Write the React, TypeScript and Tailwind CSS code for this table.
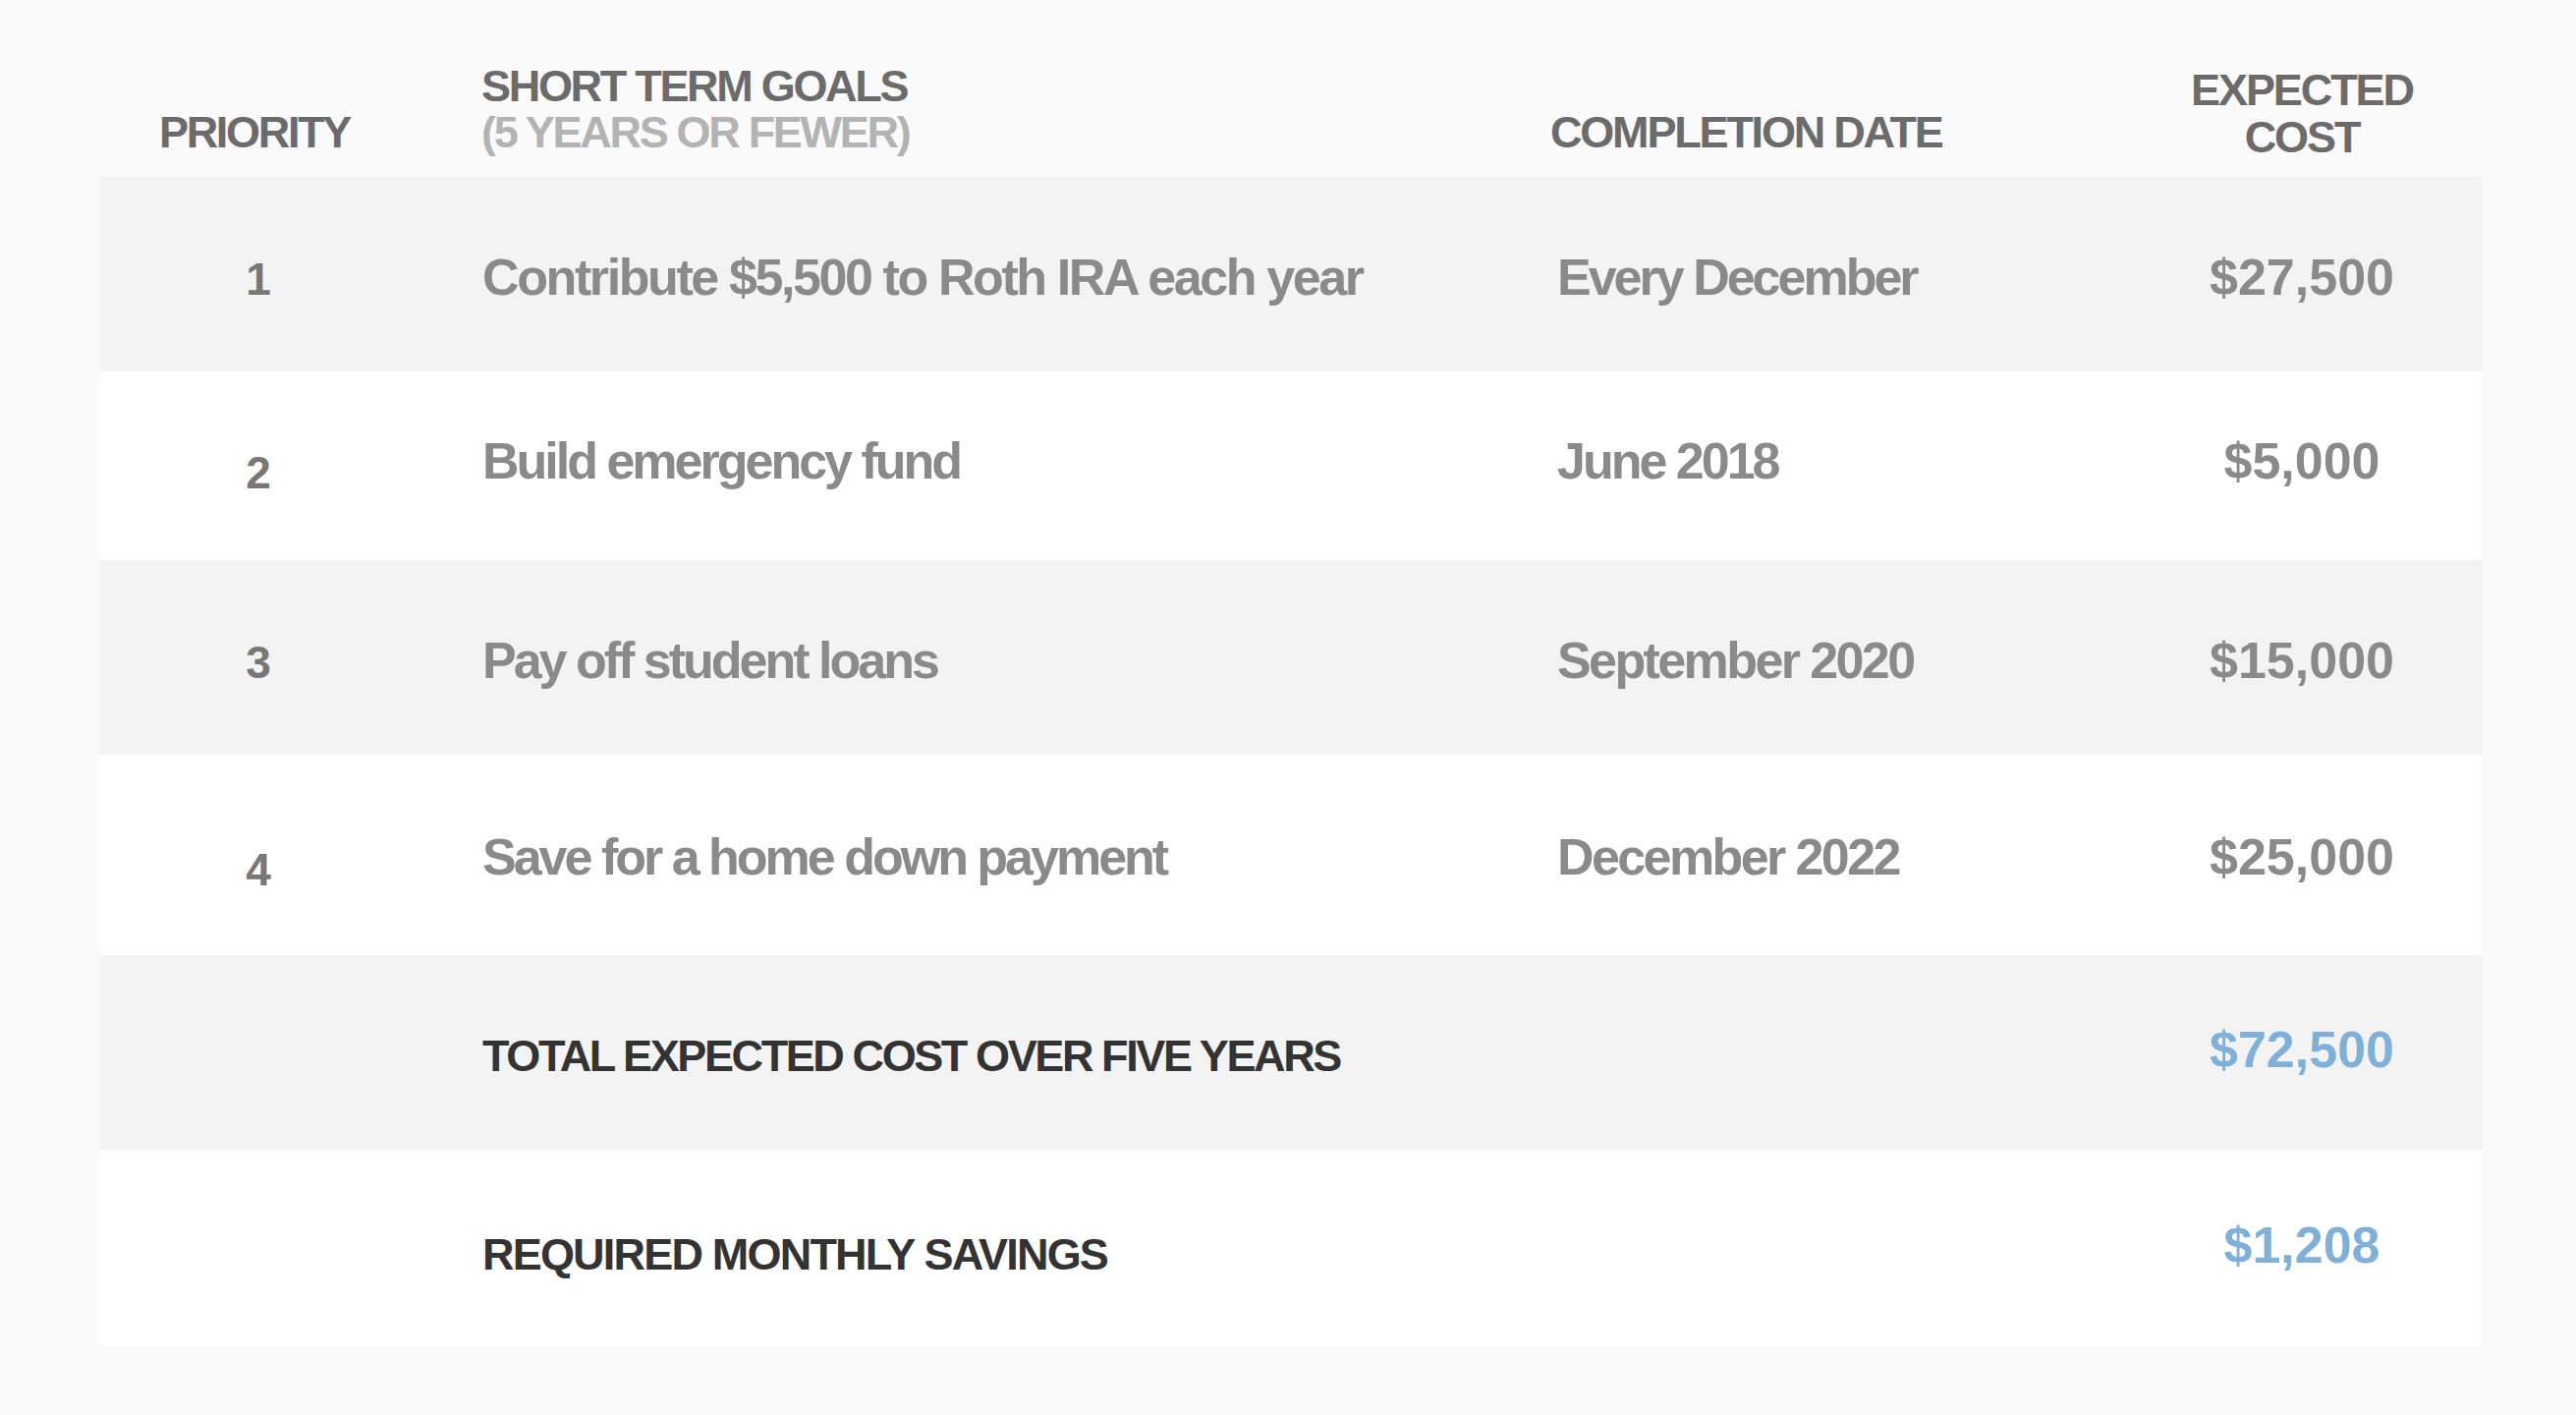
const font = { fontFamily: '"Liberation Sans", Arial, sans-serif' };

type Goal = {
  priority: string;
  goal: string;
  date: string;
  cost: string;
  h: string;
  bg: string;
  numPad: string;
  textPad: string;
  goalTrack: string;
  dateTrack: string;
};

// small per-row nudges copy the slightly uneven baselines of the original
const goals: Goal[] = [
  { priority: "1", goal: "Contribute $5,500 to Roth IRA each year", date: "Every December", cost: "$27,500", h: "h-[198px]", bg: "bg-[#f3f3f3]", numPad: "pt-[10px]", textPad: "pt-[6px]", goalTrack: "tracking-[-2.4px]", dateTrack: "tracking-[-3px]" },
  { priority: "2", goal: "Build emergency fund", date: "June 2018", cost: "$5,000", h: "h-[192px]", bg: "bg-white", numPad: "pt-[14px]", textPad: "pb-[10px]", goalTrack: "tracking-[-3px]", dateTrack: "tracking-[-3px]" },
  { priority: "3", goal: "Pay off student loans", date: "September 2020", cost: "$15,000", h: "h-[198px]", bg: "bg-[#f3f3f3]", numPad: "pt-[9px]", textPad: "pt-[6px]", goalTrack: "tracking-[-3px]", dateTrack: "tracking-[-2.6px]" },
  { priority: "4", goal: "Save for a home down payment", date: "December 2022", cost: "$25,000", h: "h-[204px]", bg: "bg-white", numPad: "pt-[29px]", textPad: "pt-[4px]", goalTrack: "tracking-[-3px]", dateTrack: "tracking-[-2.6px]" },
];

const cols = "grid grid-cols-[316px_1167px_575px_1fr]";

export default function App() {
  return (
    <div className="min-h-[1440px] w-[2622px] bg-[#fafafa] pl-[102px] pr-[96px]" style={font}>
      {/* header */}
      <div className={`${cols} h-[180px] items-end font-bold text-[#6b6b6b] text-[45px] leading-[47px] tracking-[-2.3px]`}>
        <div className="pb-[22px] pr-[2px] text-center">PRIORITY</div>
        <div className="pb-[22px] pl-[72px]">
          <div>SHORT TERM GOALS</div>
          <div className="text-[#b3b3b3]">(5 YEARS OR FEWER)</div>
        </div>
        <div className="pb-[22px] -ml-[7px] tracking-[-2.2px]">COMPLETION DATE</div>
        <div className="pb-[16px] text-center leading-[48px] tracking-[-2.1px]">
          <div>EXPECTED</div>
          <div>COST</div>
        </div>
      </div>

      {/* goal rows */}
      {goals.map((g) => (
        <div key={g.priority} className={`${cols} ${g.h} ${g.bg} items-center font-bold text-[#8a8a8a] text-[52px] leading-none`}>
          <div className={`${g.numPad} pl-[6px] text-center text-[46px] text-[#777777]`}>{g.priority}</div>
          <div className={`${g.textPad} ${g.goalTrack} pl-[73px]`}>{g.goal}</div>
          <div className={`${g.textPad} ${g.dateTrack}`}>{g.date}</div>
          <div className={`${g.textPad} text-center`}>{g.cost}</div>
        </div>
      ))}

      {/* totals */}
      <div className={`${cols} h-[198px] bg-[#f3f3f3] items-center font-bold leading-none`}>
        <div />
        <div className="pt-[6px] pl-[73px] text-[45px] text-[#333333] tracking-[-2.4px]">TOTAL EXPECTED COST OVER FIVE YEARS</div>
        <div />
        <div className="pb-[6px] text-center text-[52px] text-[#7fb0d9]">$72,500</div>
      </div>
      <div className={`${cols} h-[200px] bg-white items-center font-bold leading-none`}>
        <div />
        <div className="pt-[12px] pl-[73px] text-[45px] text-[#333333] tracking-[-1.8px]">REQUIRED MONTHLY SAVINGS</div>
        <div />
        <div className="pb-[6px] text-center text-[52px] text-[#7fb0d9]">$1,208</div>
      </div>
    </div>
  );
}
